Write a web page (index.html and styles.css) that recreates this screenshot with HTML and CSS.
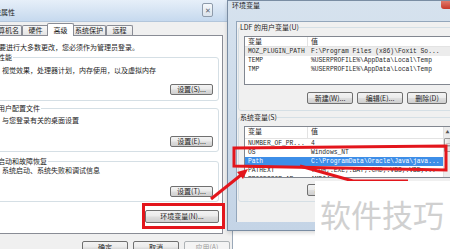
FILE: index.html
```html
<!DOCTYPE html>
<html lang="zh-CN">
<head>
<meta charset="utf-8">
<title>环境变量</title>
<link rel="stylesheet" href="styles.css">
</head>
<body>
<div class="desk">
  <section class="win-left">
    <header class="titlebar">
      <span class="title">系统属性</span>
      <span class="close-btn">✕</span>
    </header>
    <nav class="tabs">
      <span class="tab">计算机名</span>
      <span class="tab">硬件</span>
      <span class="tab active">高级</span>
      <span class="tab">系统保护</span>
      <span class="tab">远程</span>
    </nav>
    <div class="panel">
      <p class="note">要进行大多数更改，您必须作为管理员登录。</p>
      <div class="group g1">
        <div class="group-title">性能</div>
        <p class="desc d1">视觉效果，处理器计划，内存使用，以及虚拟内存</p>
        <div class="btn-row r1"><button class="btn btn-set">设置(S)...</button></div>
      </div>
      <div class="group g2">
        <div class="group-title">用户配置文件</div>
        <p class="desc d2">与您登录有关的桌面设置</p>
        <div class="btn-row r2"><button class="btn btn-set">设置(E)...</button></div>
      </div>
      <div class="group g3">
        <div class="group-title">启动和故障恢复</div>
        <p class="desc d3">系统启动、系统失败和调试信息</p>
        <div class="btn-row r2"><button class="btn btn-set">设置(T)...</button></div>
      </div>
      <div class="btn-row env-row"><button class="btn btn-env">环境变量(N)...</button></div>
    </div>
    <footer class="footer">
      <button class="btn btn-dlg">确定</button>
      <button class="btn btn-dlg">取消</button>
      <button class="btn btn-dlg disabled">应用(A)</button>
    </footer>
  </section>

  <section class="win-right">
    <header class="rtitlebar">
      <span class="rtitle">环境变量</span>
      <span class="rclose"></span>
    </header>
    <div class="rbody">
      <div class="client">
        <div class="rgroup rg1">
          <div class="group-title rtitle-g">LDF 的用户变量(U)</div>
          <div class="list list-user">
            <div class="list-main">
              <div class="lhead"><span>变量</span><span>值</span></div>
              <div class="lrow soft"><span>MOZ_PLUGIN_PATH</span><span>F:\Program Files (x86)\Foxit So...</span></div>
              <div class="lrow"><span>TEMP</span><span>%USERPROFILE%\AppData\Local\Temp</span></div>
              <div class="lrow"><span>TMP</span><span>%USERPROFILE%\AppData\Local\Temp</span></div>
            </div>
          </div>
          <div class="rbtns">
            <button class="btn rbtn">新建(W)...</button>
            <button class="btn rbtn">编辑(E)...</button>
            <button class="btn rbtn narrow">删除(D)</button>
          </div>
        </div>
        <div class="rgroup rg2">
          <div class="group-title rtitle-g">系统变量(S)</div>
          <div class="list list-sys">
            <div class="list-main">
              <div class="lhead tall"><span>变量</span><span>值</span></div>
              <div class="lrow"><span>NUMBER_OF_PR...</span><span>4</span></div>
              <div class="lrow"><span>OS</span><span>Windows_NT</span></div>
              <div class="lrow sel"><span>Path</span><span>C:\ProgramData\Oracle\Java\java...</span></div>
              <div class="lrow"><span>PATHEXT</span><span>.COM;.EXE;.BAT;.CMD;.VBS;.VBE;...</span></div>
              <div class="lrow"><span>PROCESSOR_AR...</span><span>AMD64</span></div>
            </div>
            <div class="sbar">
              <span class="sarrow">▲</span>
              <span class="sthumb">≡</span>
            </div>
          </div>
          <div class="rbtns r-sys">
            <button class="btn rbtn">新建(W)...</button>
          </div>
        </div>
      </div>
    </div>
  </section>

  <svg class="annot" width="450" height="249" viewBox="0 0 450 249">
    <rect x="143.5" y="204.5" width="80" height="23" fill="none" stroke="#e3161c" stroke-width="3"/>
    <line x1="211" y1="199" x2="241" y2="175" stroke="#e3161c" stroke-width="3"/>
    <polygon points="248,169 243,179 237,172" fill="#e3161c"/>
    <polygon points="234,148 446,146 446,170 234,166" fill="none" stroke="#e3161c" stroke-width="3"/>
    <polyline points="300,166 353,181 408,181" fill="none" stroke="#e3161c" stroke-width="3"/>
  </svg>

  <div class="watermark">软件技巧</div>
</div>
</body>
</html>
```

FILE: styles.css
```css
* { box-sizing: border-box; margin: 0; padding: 0; }
html, body { width: 450px; height: 249px; overflow: hidden; background: #fff; }
body {
  font-family: "Noto Sans CJK SC", "Noto Sans", sans-serif;
  font-size: 7px;
  line-height: 9px;
  color: #1c1c1c;
}
.desk { position: relative; width: 450px; height: 249px; overflow: hidden; background: #fff; }

/* ---------- left window ---------- */
.win-left {
  position: absolute; left: -14px; top: 0;
  width: 247px; height: 262px;
  background: #f0f0f0;
  border-right: 1px solid #9aa8b8;
}
.titlebar {
  height: 22px;
  display: flex; align-items: flex-start;
  background: linear-gradient(#e6eff9, #d3e2f2 60%, #c6d9ee);
  border-bottom: 1px solid #b3c6db;
}
.title { padding: 8px 0 0 1px; white-space: nowrap; }
.close-btn {
  margin: 3px 19px 0 auto;
  width: 11px; height: 14px;
  border: 1px solid #8e9bab; border-radius: 2px;
  background: linear-gradient(#f5f8fb, #dbe3ec);
  font-size: 7px; line-height: 12px; text-align: center; color: #59626e;
}
.tabs {
  display: flex; align-items: flex-end;
  height: 14px; padding-left: 2px; margin-bottom: -1px;
  position: relative; z-index: 1;
}
.tab {
  min-width: 27px; height: 10px; margin-bottom: 1px;
  padding: 0 2px; text-align: center; white-space: nowrap;
  border: 1px solid #898c95; border-bottom: none;
  border-radius: 2px 2px 0 0;
  background: linear-gradient(#f7f7f7, #e4e4e4);
  line-height: 9px;
}
.tab.active {
  height: 13px; margin: 0 -2px; padding-top: 2px;
  background: #fff; position: relative; z-index: 2;
}
.panel {
  margin: 0 9px 0 2px; height: 199px;
  border: 1px solid #898c95; background: #fff;
  padding: 7px 2px 10px 10px;
  white-space: nowrap;
}
.group {
  margin: 0 1px 0 -7px;
  border: 1px solid #d5dfe5; border-radius: 3px;
  padding: 0 5px 4px 9px;
}
.g1 { margin-top: 5px; padding-bottom: 5px; }
.g2 { margin-top: 7px; }
.g3 { margin-top: 9px; }
.group-title {
  width: max-content; margin: -5px 0 0 -5px; padding: 0 1px;
  background: #fff;
}
.d1 { margin-top: 4px; }
.d2 { margin-top: 3px; }
.d3 { margin-top: 0; }
.btn-row { display: flex; justify-content: flex-end; }
.r1 { margin-top: 9px; }
.r2 { margin-top: 11px; }
.env-row { margin-top: 8px; padding-right: 1px; }

.btn {
  font-family: inherit; font-size: 7px; line-height: 9px; color: #1c1c1c;
  border: 1px solid #707070; border-radius: 2px;
  background: linear-gradient(#f3f3f3, #ebebeb 45%, #dddddd 55%, #cfcfcf);
  white-space: nowrap; text-align: center; overflow: visible;
}
.btn-set { width: 43px; height: 11px; }
.btn-env { width: 74px; height: 13px; }
.footer { display: flex; justify-content: flex-end; gap: 5px; margin-top: 7px; padding-right: 2px; }
.btn-dlg { width: 46px; height: 13px; }
.btn.disabled { color: #9a9a9a; border-color: #adb2b5; background: #f4f4f4; }

/* ---------- right window ---------- */
.win-right {
  position: absolute; left: 227px; top: 0;
  width: 235px; height: 231px;
  display: flex; flex-direction: column;
  border: 1px solid #7a8da3;
  background: linear-gradient(#d6e2ee, #c4d4e6);
  box-shadow: 0 2px 4px rgba(0,0,0,0.15);
}
.rtitlebar { height: 20px; display: flex; align-items: flex-start; padding-left: 4px; }
.rtitle { white-space: nowrap; }
.rclose {
  margin-left: auto; margin-right: 8px;
  width: 12px; height: 8px;
  background: linear-gradient(#e07a6c, #c7382a);
  border-radius: 0 0 3px 3px;
}
.rbody { flex: 1; display: flex; padding: 0 0 8px 8px; }
.client {
  flex: 1; background: #f0f0f0;
  border-left: 1px solid #93a6bb; border-top: 1px solid #93a6bb;
  white-space: nowrap;
}
.rgroup {
  margin-left: 1px;
  border: 1px solid #d5dfe5; border-radius: 3px;
  padding: 0 0 6px 5px;
}
.rg1 { margin-top: 5px; }
.rg2 { margin-top: 6px; padding-bottom: 5px; }
.rtitle-g { margin-left: -4px; padding: 0; background: #f0f0f0; }
.list {
  display: flex; width: 208px; margin-top: 4px;
  border: 1px solid #828790; background: #fff; overflow: hidden;
}
.list-user { height: 49px; }
.list-sys { height: 52px; }
.list-main { flex: 1; overflow: hidden; }
.lhead, .lrow { display: grid; grid-template-columns: 63px 1fr; }
.lhead { height: 10px; border-bottom: 1px solid #e3e3e3; }
.lhead.tall { height: 12px; }
.lhead span { padding-left: 3px; line-height: 9px; }
.lhead span:first-child { border-right: 1px solid #e3e3e3; }
.lrow { height: 9px; }
.lrow span {
  padding-left: 3px; overflow: hidden;
  font-family: "Liberation Mono", monospace; font-size: 6.3px; line-height: 9px;
  color: #2a2a2a;
}
.lrow.soft { background: #ececec; }
.lrow.sel { background: #3d8ee8; }
.lrow.sel span { color: #fff; }
.sbar { width: 8px; background: #ececec; display: flex; flex-direction: column; align-items: center; border-left: 1px solid #e0e0e0; }
.sarrow { font-size: 4px; line-height: 10px; color: #555; }
.sthumb {
  width: 7px; height: 14px; margin-top: 1px;
  border: 1px solid #9a9a9a; border-radius: 1px;
  background: linear-gradient(90deg, #f4f4f4, #dcdcdc);
  font-size: 6px; line-height: 12px; text-align: center; color: #666;
}
.rbtns { display: flex; gap: 4px; margin-top: 7px; padding-left: 63px; }
.r-sys { margin-top: 6px; }
.rbtn { width: 46px; height: 12px; line-height: 10px; }
.rbtn.narrow { width: 40px; }

/* ---------- overlays ---------- */
.annot { position: absolute; left: 0; top: 0; pointer-events: none; }
.watermark {
  position: absolute; left: 315px; top: 181px;
  width: 140px; height: 70px;
  background: #fff;
  padding: 17px 0 0 5px;
  font-size: 31px; line-height: 31px; color: #d0d0d0;
  white-space: nowrap;
}
```
